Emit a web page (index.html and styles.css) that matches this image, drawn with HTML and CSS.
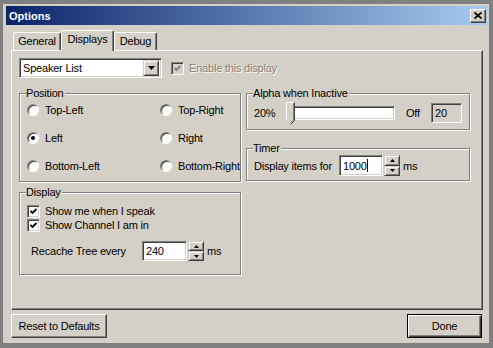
FILE: index.html
```html
<!DOCTYPE html>
<html lang="en">

<head>
    <meta charset="UTF-8">
    <title>Options</title>
    <link rel="stylesheet" href="styles.css">
</head>

<body>
    <div class="window">
        <div class="titlebar">
            <span class="title">Options</span>
            <span class="close">
                <svg width="8" height="7" viewBox="0 0 8 7"><path d="M0.5 0.5L7.5 6.5M7.5 0.5L0.5 6.5" stroke="#000" stroke-width="1.7" /></svg>
            </span>
        </div>

        <div class="body">
            <div class="tabs">
                <div class="tab tab-general">General</div>
                <div class="tab tab-displays active">Displays</div>
                <div class="tab tab-debug">Debug</div>
            </div>

            <div class="panel">
                <div class="top-row">
                    <div class="select">
                        <span class="select-value">Speaker List</span>
                        <span class="select-arrow">
                            <svg width="7" height="4" viewBox="0 0 7 4"><path d="M0 0H7L3.5 4Z" fill="#000" /></svg>
                        </span>
                    </div>
                    <div class="check disabled">
                        <span class="box">
                            <svg width="7" height="7" viewBox="0 0 7 7"><path d="M0.5 3L2.5 5L6.5 1" stroke="#808080" stroke-width="1.8" fill="none" /></svg>
                        </span>
                        <span>Enable this display</span>
                    </div>
                </div>

                <div class="columns">
                    <div class="col">
                        <div class="group group-position">
                            <span class="group-title">Position</span>
                            <div class="radio-grid">
                                <div class="radio"><span class="dot"></span>Top-Left</div>
                                <div class="radio"><span class="dot"></span>Top-Right</div>
                                <div class="radio"><span class="dot on"></span>Left</div>
                                <div class="radio"><span class="dot"></span>Right</div>
                                <div class="radio"><span class="dot"></span>Bottom-Left</div>
                                <div class="radio"><span class="dot"></span>Bottom-Right</div>
                            </div>
                        </div>

                        <div class="group group-display">
                            <span class="group-title">Display</span>
                            <div class="check">
                                <span class="box">
                                    <svg width="7" height="7" viewBox="0 0 7 7"><path d="M0.5 3L2.5 5L6.5 1" stroke="#000" stroke-width="1.8" fill="none" /></svg>
                                </span>
                                <span>Show me when I speak</span>
                            </div>
                            <div class="check">
                                <span class="box">
                                    <svg width="7" height="7" viewBox="0 0 7 7"><path d="M0.5 3L2.5 5L6.5 1" stroke="#000" stroke-width="1.8" fill="none" /></svg>
                                </span>
                                <span>Show Channel I am in</span>
                            </div>
                            <div class="field-row recache">
                                <span class="field-label">Recache Tree every</span>
                                <span class="input">240</span>
                                <span class="spin">
                                    <span class="spin-btn"><svg width="5" height="3" viewBox="0 0 5 3"><path d="M2.5 0L5 3H0Z" fill="#000" /></svg></span>
                                    <span class="spin-btn"><svg width="5" height="3" viewBox="0 0 5 3"><path d="M0 0H5L2.5 3Z" fill="#000" /></svg></span>
                                </span>
                                <span class="unit">ms</span>
                            </div>
                        </div>
                    </div>

                    <div class="col">
                        <div class="group group-alpha">
                            <span class="group-title">Alpha when Inactive</span>
                            <div class="alpha-row">
                                <span class="alpha-min">20%</span>
                                <div class="slider">
                                    <span class="track"></span>
                                    <svg class="thumb" width="9" height="23" viewBox="0 0 9 23">
                                        <path d="M0.5 0.5H8.5V18.5L4.5 22.5L0.5 18.5Z" fill="#d4d0c8" />
                                        <path d="M0.5 18.5V0.5H8" stroke="#fff" fill="none" />
                                        <path d="M8.5 0.5V18.5L4.5 22.5" stroke="#404040" fill="none" />
                                        <path d="M7.5 1.5V18L4.5 21" stroke="#808080" fill="none" />
                                    </svg>
                                </div>
                                <span class="alpha-off">Off</span>
                                <span class="value-box">20</span>
                            </div>
                        </div>

                        <div class="group group-timer">
                            <span class="group-title">Timer</span>
                            <div class="field-row">
                                <span class="field-label timer-label">Display items for</span>
                                <span class="input timer-input">1000<span class="caret"></span></span>
                                <span class="spin timer-spin">
                                    <span class="spin-btn"><svg width="5" height="3" viewBox="0 0 5 3"><path d="M2.5 0L5 3H0Z" fill="#000" /></svg></span>
                                    <span class="spin-btn"><svg width="5" height="3" viewBox="0 0 5 3"><path d="M0 0H5L2.5 3Z" fill="#000" /></svg></span>
                                </span>
                                <span class="unit">ms</span>
                            </div>
                        </div>
                    </div>
                </div>
            </div>

            <div class="actions">
                <button class="btn btn-reset">Reset to Defaults</button>
                <button class="btn btn-done">Done</button>
            </div>
        </div>
    </div>
</body>

</html>
```

FILE: styles.css
```css
body {
    margin: 0;
    padding: 0;
    font-family: 'Liberation Sans', Arial, sans-serif;
    font-size: 11px;
    letter-spacing: -0.2px;
    color: #000;
    background-color: #808080;
}

.window {
    width: 493px;
    height: 348px;
    box-sizing: border-box;
    border-style: solid;
    border-color: #808080;
    border-width: 4px 4px 5px 3px;
    padding: 2px 2px 0 3px;
    background-color: #d4d0c8;
    display: flex;
    flex-direction: column;
}

.titlebar {
    height: 19px;
    flex: none;
    display: flex;
    align-items: center;
    justify-content: space-between;
    padding: 0 1px 0 3px;
    background: linear-gradient(90deg, #0a246a, #a6caf0);
}

.title {
    color: #fff;
    font-weight: bold;
    letter-spacing: 0;
}

.close {
    width: 16px;
    height: 14px;
    box-sizing: border-box;
    display: flex;
    align-items: center;
    justify-content: center;
    background-color: #d4d0c8;
    border: 1px solid;
    border-color: #fff #404040 #404040 #fff;
    box-shadow: inset -1px -1px #808080;
}

.body {
    flex: 1;
    display: flex;
    flex-direction: column;
    padding: 5px 4px 0 5px;
}

/* tabs */

.tabs {
    height: 20px;
    display: flex;
    align-items: flex-end;
    padding-left: 2px;
}

.tab {
    height: 18px;
    box-sizing: border-box;
    border: 1px solid;
    border-color: #fff #404040 transparent #fff;
    border-bottom: none;
    border-radius: 2px 2px 0 0;
    box-shadow: inset -1px 0 #808080;
    text-align: center;
    line-height: 17px;
}

.tab-general {
    width: 48px;
}

.tab-displays {
    width: 53px;
}

.tab-debug {
    width: 43px;
}

.tab.active {
    height: 21px;
    margin-bottom: -1px;
    position: relative;
    z-index: 1;
    background-color: #d4d0c8;
    line-height: 17px;
}

.panel {
    height: 260px;
    flex: none;
    box-sizing: border-box;
    border: 1px solid;
    border-color: #fff #404040 #404040 #fff;
    box-shadow: inset -1px -1px #808080;
    padding: 7px 10px 0 7px;
}

/* common controls */

.sunken {
    border: 1px solid;
}

.select,
.input,
.value-box,
.track,
.box {
    box-sizing: border-box;
    border: 1px solid;
    border-color: #808080 #fff #fff #808080;
    box-shadow: inset 1px 1px #404040, inset -1px -1px #d4d0c8;
    background-color: #fff;
}

.select-arrow,
.spin-btn {
    box-sizing: border-box;
    display: flex;
    align-items: center;
    justify-content: center;
    background-color: #d4d0c8;
    border: 1px solid;
    border-color: #d4d0c8 #404040 #404040 #d4d0c8;
    box-shadow: inset 1px 1px #fff, inset -1px -1px #808080;
}

.top-row {
    height: 20px;
    display: flex;
    align-items: center;
}

.select {
    width: 143px;
    height: 20px;
    display: flex;
    align-items: center;
    padding: 2px;
}

.select-value {
    flex: 1;
    padding-left: 1px;
}

.select-arrow {
    width: 16px;
    height: 16px;
}

.check {
    display: flex;
    align-items: center;
    gap: 5px;
    height: 14px;
}

.top-row .check {
    margin-left: 9px;
}

.box {
    width: 13px;
    height: 13px;
    display: flex;
    align-items: center;
    justify-content: center;
}

.check.disabled {
    color: #808080;
    text-shadow: 1px 1px #fff;
}

.check.disabled .box {
    background-color: #d4d0c8;
}

/* group boxes */

.columns {
    display: grid;
    grid-template-columns: 222px 224px;
    column-gap: 5px;
    align-items: start;
    margin-top: 15px;
}

.col {
    display: flex;
    flex-direction: column;
}

.group {
    position: relative;
    border: 1px solid #808080;
    box-shadow: inset 1px 1px #fff, 1px 1px #fff;
}

.group-title {
    position: absolute;
    top: -7px;
    left: 6px;
    padding: 0 1px 0 0;
    line-height: 13px;
    background-color: #d4d0c8;
}

.group-position {
    height: 89px;
    box-sizing: border-box;
    padding: 8px 0 0 7px;
}

.radio-grid {
    display: grid;
    grid-template-columns: 133px auto;
    grid-auto-rows: 16px;
    row-gap: 12px;
}

.radio {
    display: flex;
    align-items: center;
    gap: 6px;
}

.dot {
    width: 12px;
    height: 12px;
    box-sizing: border-box;
    border-radius: 50%;
    border: 1px solid;
    border-color: #808080 #fff #fff #808080;
    box-shadow: inset 1px 1px #404040;
    background-color: #fff;
    display: flex;
    align-items: center;
    justify-content: center;
}

.dot.on::after {
    content: "";
    width: 4px;
    height: 4px;
    border-radius: 50%;
    background-color: #000;
}

.group-display {
    margin-top: 10px;
    height: 83px;
    box-sizing: border-box;
    padding: 11px 0 0 7px;
}

.field-row {
    display: flex;
    align-items: center;
}

.recache {
    margin-top: 9px;
    padding-left: 4px;
}

.recache .field-label {
    width: 111px;
}

.input {
    width: 45px;
    height: 20px;
    display: flex;
    align-items: center;
    padding-left: 3px;
}

.spin {
    width: 16px;
    height: 20px;
    display: flex;
    flex-direction: column;
    margin-left: 1px;
}

.spin-btn {
    flex: 1;
}

.unit {
    margin-left: 3px;
}

.group-alpha {
    height: 37px;
    box-sizing: border-box;
    padding: 9px 0 0 7px;
}

.alpha-row {
    height: 20px;
    display: flex;
    align-items: center;
}

.alpha-min {
    width: 32px;
}

.slider {
    width: 109px;
    height: 23px;
    position: relative;
    display: flex;
    align-items: center;
}

.track {
    width: 103px;
    height: 14px;
    margin-left: 6px;
}

.thumb {
    position: absolute;
    left: 0;
    top: 0;
}

.alpha-off {
    margin-left: 11px;
    width: 25px;
}

.value-box {
    width: 31px;
    height: 20px;
    display: flex;
    align-items: center;
    padding-left: 3px;
    background-color: #d4d0c8;
}

.group-timer {
    margin-top: 18px;
    height: 33px;
    box-sizing: border-box;
    padding: 6px 0 0 7px;
}

.timer-label {
    width: 85px;
}

.timer-input {
    width: 44px;
    height: 21px;
}

.timer-spin {
    height: 21px;
}

.caret {
    width: 1px;
    height: 13px;
    background-color: #000;
}

/* bottom buttons */

.actions {
    display: flex;
    justify-content: space-between;
    margin-top: 4px;
    padding-right: 1px;
}

.btn {
    height: 24px;
    box-sizing: border-box;
    font-family: inherit;
    font-size: 11px;
    letter-spacing: -0.2px;
    color: #000;
    background-color: #d4d0c8;
    border: 1px solid;
    border-color: #fff #404040 #404040 #fff;
    box-shadow: inset -1px -1px #808080;
    padding: 0;
}

.btn-reset {
    width: 96px;
}

.btn-done {
    width: 75px;
    border-color: #000;
    box-shadow: inset 1px 1px #fff, inset -1px -1px #404040, inset -2px -2px #808080;
}
```
